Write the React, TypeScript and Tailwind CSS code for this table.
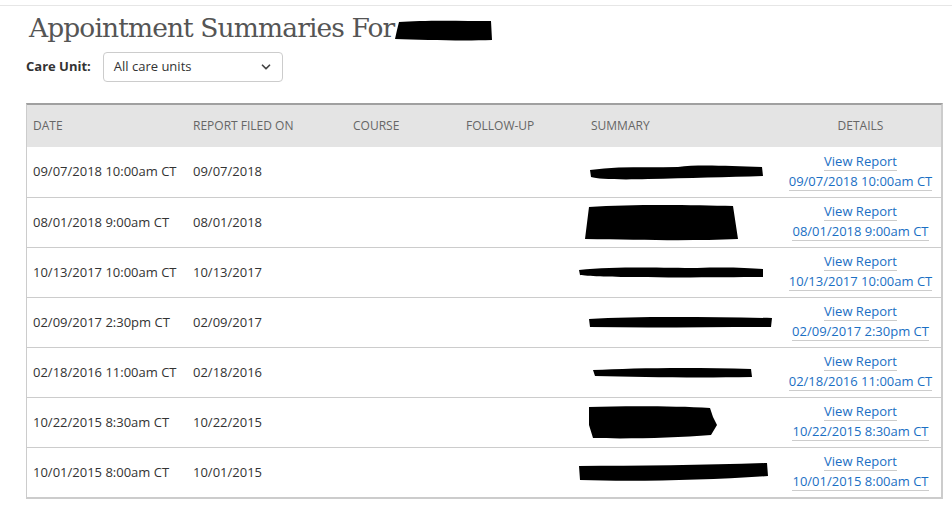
import { ChevronDown } from "lucide-react";

const rows = [
  { date: "09/07/2018 10:00am CT", filed: "09/07/2018", blob: "a" },
  { date: "08/01/2018 9:00am CT", filed: "08/01/2018", blob: "b" },
  { date: "10/13/2017 10:00am CT", filed: "10/13/2017", blob: "c" },
  { date: "02/09/2017 2:30pm CT", filed: "02/09/2017", blob: "d" },
  { date: "02/18/2016 11:00am CT", filed: "02/18/2016", blob: "e" },
  { date: "10/22/2015 8:30am CT", filed: "10/22/2015", blob: "f" },
  { date: "10/01/2015 8:00am CT", filed: "10/01/2015", blob: "g" },
];

// hand-drawn redaction marks over the summary column
function Blob({ kind }: { kind: string }) {
  if (kind === "a")
    return (
      <svg width="180" height="24" viewBox="0 0 180 24" className="ml-[-3px]">
        <path d="M2 10 C30 6 60 8 90 7 C110 4 140 6 174 7 L175 16 C140 17 100 18 60 19 C30 20 10 19 3 17 Z" fill="#000" />
      </svg>
    );
  if (kind === "b")
    return (
      <svg width="160" height="40" viewBox="0 0 160 40" className="ml-[-8px]">
        <path d="M6 4 C50 1 110 2 150 3 L155 36 C110 38 60 37 2 36 L4 20 Z" fill="#000" />
      </svg>
    );
  if (kind === "c")
    return (
      <svg width="190" height="18" viewBox="0 0 190 18" className="ml-[-14px]">
        <path d="M2 6 C40 2 90 4 120 4 C150 3 170 4 186 5 L186 13 C150 13 100 14 60 13 C30 13 10 12 3 11 Z" fill="#000" />
      </svg>
    );
  if (kind === "d")
    return (
      <svg width="190" height="18" viewBox="0 0 190 18" className="ml-[-4px]">
        <path d="M2 5 C50 2 120 3 185 4 L184 13 C120 13 60 14 3 13 Z" fill="#000" />
      </svg>
    );
  if (kind === "e")
    return (
      <svg width="165" height="16" viewBox="0 0 165 16" className="ml-[0px]">
        <path d="M2 5 C40 3 100 2 160 4 L161 12 C100 13 50 12 4 11 Z" fill="#000" />
      </svg>
    );
  if (kind === "f")
    return (
      <svg width="135" height="36" viewBox="0 0 135 36" className="ml-[-6px]">
        <path d="M4 2 C40 1 90 1 125 3 L128 12 L132 20 L126 30 C90 33 40 34 8 33 L4 20 Z" fill="#000" />
      </svg>
    );
  return (
    <svg width="195" height="22" viewBox="0 0 195 22" className="ml-[-14px]">
      <path d="M2 4 C60 4 130 3 190 1 L191 14 C130 18 60 20 3 18 Z" fill="#000" />
    </svg>
  );
}

export default function App() {
  return (
    <div className="w-[952px] h-[510px] bg-white overflow-hidden" style={{ fontFamily: '"Open Sans", sans-serif' }}>
      <div className="mt-[5px] border-t border-[#e6e6e6]" />
      <div className="pl-[26px] pr-[9px]">
        <div className="flex items-center h-[44px] pl-[3px]">
          <h1 className="text-[26.5px] text-[#555] leading-none tracking-[-0.9px]" style={{ fontFamily: '"DejaVu Serif", serif', fontWeight: 300 }}>
            Appointment Summaries For
          </h1>
          <svg width="100" height="24" viewBox="0 0 100 24" className="ml-[-1px] mt-[4px]">
            <path d="M6 4 C30 2 70 3 98 3 L99 22 C70 23 30 22 2 21 L4 12 Z" fill="#000" />
          </svg>
        </div>
        <div className="flex items-center mt-[2px] gap-[12px]">
          <span className="text-[13px] font-bold text-[#333]">Care Unit:</span>
          <div className="w-[180px] h-[30px] border border-[#ccc] rounded-[4px] flex items-center justify-between pl-[10px] pr-[9px]">
            <span className="text-[13px] text-[#333]">All care units</span>
            <ChevronDown size={14} strokeWidth={3} className="text-[#444]" />
          </div>
        </div>
        <div className="mt-[21px] border-t-2 border-t-[#a0a0a0] border-l border-l-[#ccc] border-r-2 border-r-[#ccc] border-b-2 border-b-[#ccc]">
          <div className="grid grid-cols-[160px_160px_113px_125px_189px_1fr] h-[42px] items-center bg-[#e4e4e4] text-[12px] text-[#666] pl-[6px]">
            <div>DATE</div>
            <div>REPORT FILED ON</div>
            <div>COURSE</div>
            <div>FOLLOW-UP</div>
            <div>SUMMARY</div>
            <div className="text-center">DETAILS</div>
          </div>
          {rows.map((r, i) => (
            <div
              key={i}
              className={`grid grid-cols-[160px_160px_113px_125px_189px_1fr] h-[50px] items-center text-[13px] text-[#333] pl-[6px] ${i > 0 ? "border-t border-[#ccc]" : ""}`}
            >
              <div>{r.date}</div>
              <div>{r.filed}</div>
              <div />
              <div />
              <div className="flex items-center">
                <Blob kind={r.blob} />
              </div>
              <div className="flex flex-col items-center text-[13px] text-[#1a6fc4] leading-[17px] gap-[2px] mt-[-1px]">
                <span className="border-b border-[#ccc]">View Report</span>
                <span className="border-b border-[#ccc]">{r.date}</span>
              </div>
            </div>
          ))}
        </div>
      </div>
    </div>
  );
}
